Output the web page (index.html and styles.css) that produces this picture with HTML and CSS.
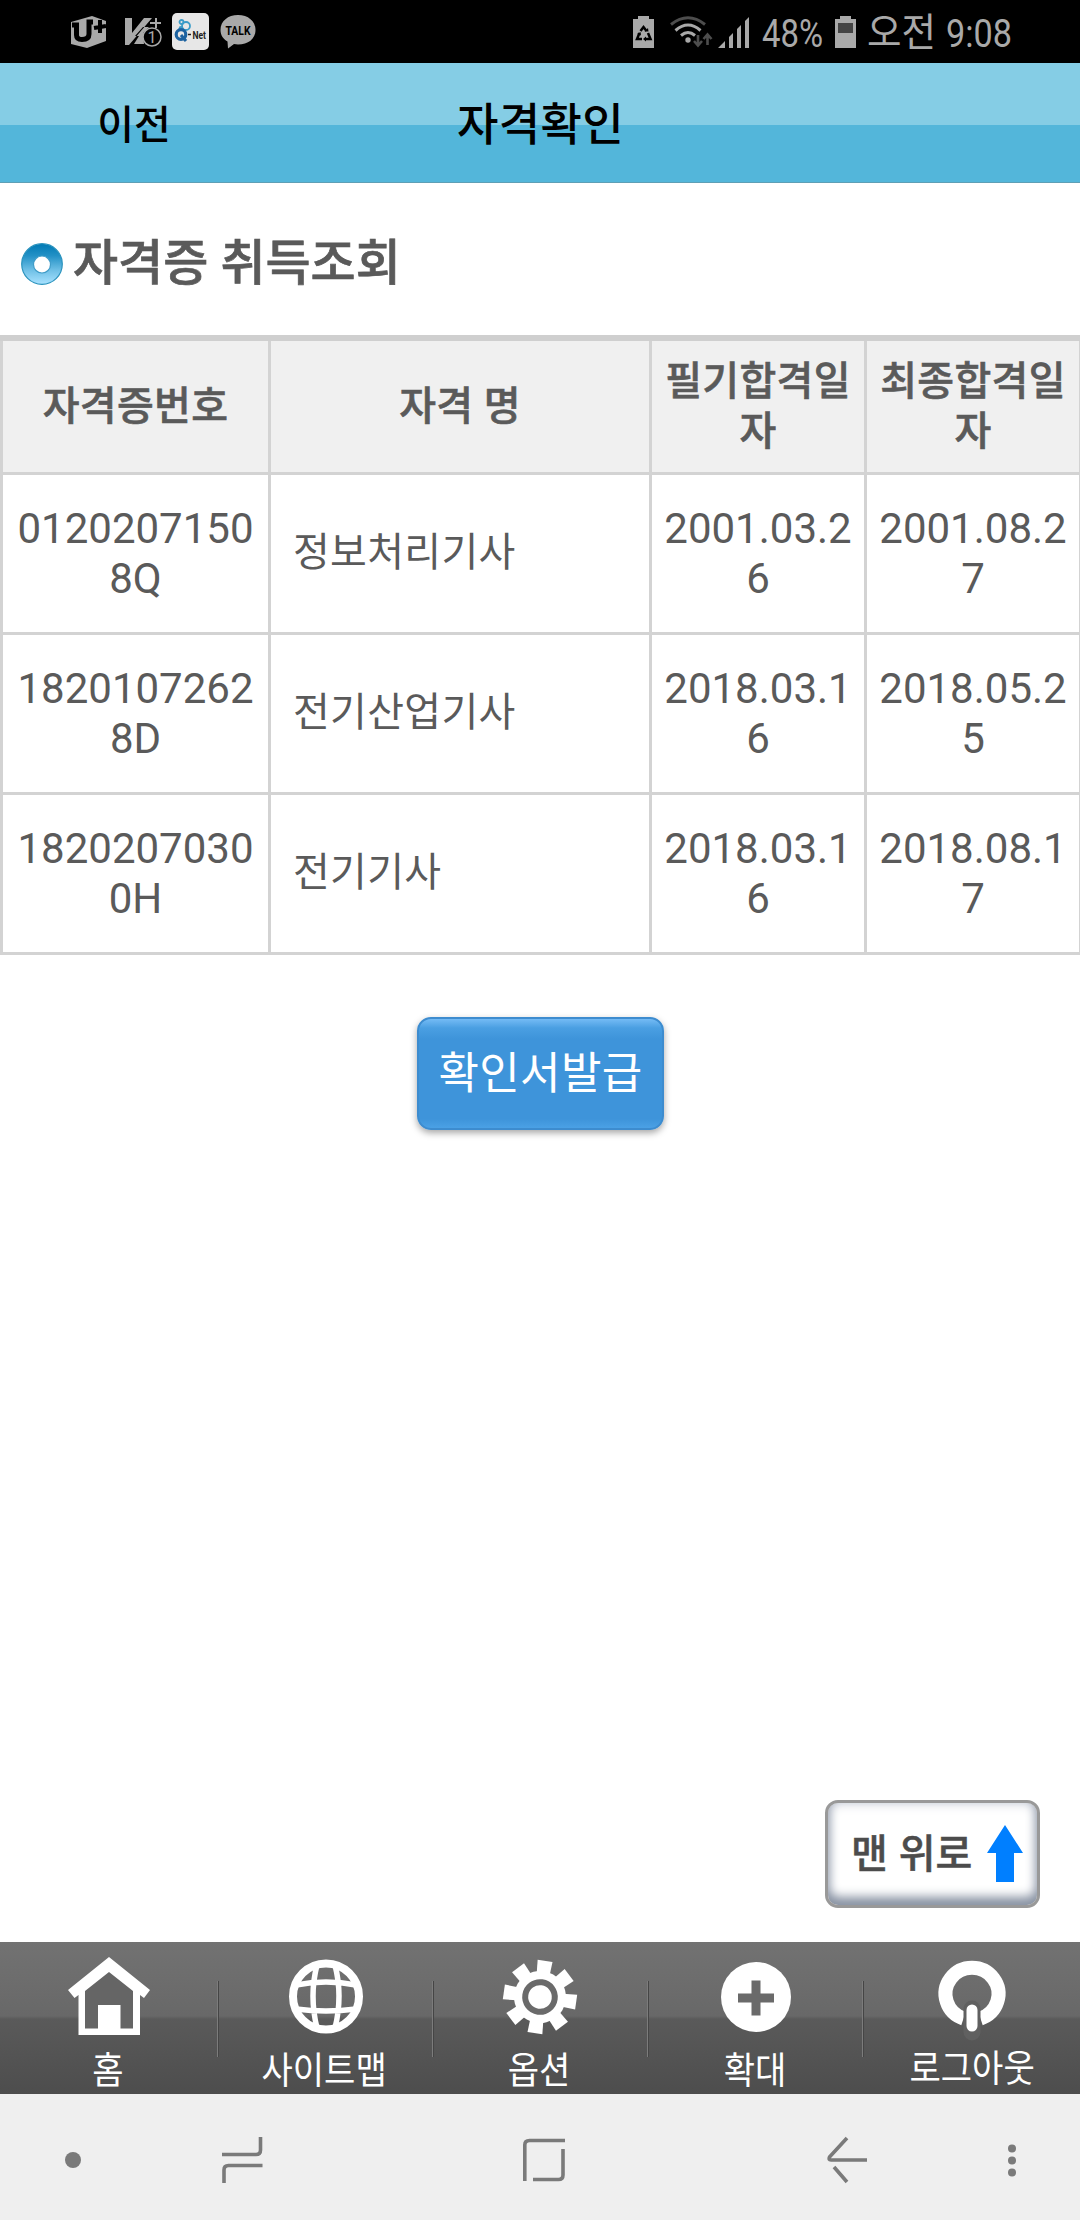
FILE: index.html
```html
<!DOCTYPE html>
<html lang="ko">
<head>
    <meta charset="UTF-8">
    <meta name="viewport" content="width=device-width, initial-scale=1.0">
    <title>자격확인</title>
    <link rel="stylesheet" href="styles.css">
</head>
<body>
    <div class="status-bar">
        <div class="status-left">
            <svg width="37" height="32" viewBox="0 0 37 32">
                <path fill="#a9a9a9" d="M1 6 L22 0 L36 5 V25 L17 32 L1 28 Z"/>
                <path fill="none" stroke="#000" stroke-width="5" d="M2 9 H6.500 V19 Q6.500 23.500 12 23.500 Q19 23.500 19 18 V6 H23"/>
                <path fill="none" stroke="#000" stroke-width="4" d="M24 12 L36 10 M30 4 V17"/>
            </svg>
            <svg width="37" height="32" viewBox="0 0 37 32">
                <path fill="#a9a9a9" d="M0 2 H7 V17 L19 2 H27 L4 29 H0 Z M18 17 L24 11 H18 L10 20 H14 L9 28 H19 Z"/>
                <path fill="none" stroke="#a9a9a9" stroke-width="2" d="M25 7 H36 M31 2 V12"/>
                <circle cx="27" cy="21" r="9" fill="#000" stroke="#a9a9a9" stroke-width="1.500"/>
                <text x="27" y="27" text-anchor="middle" class="badge-text">1</text>
            </svg>
            <svg width="37" height="37" viewBox="0 0 37 37">
                <rect width="37" height="37" rx="5" fill="#e7e7e7"/>
                <g fill="none" stroke="#3a9cc8" stroke-width="1.800">
                    <circle cx="9.500" cy="9" r="2"/>
                    <circle cx="14" cy="13" r="4"/>
                    <circle cx="9" cy="15.500" r="1.500"/>
                </g>
                <circle cx="9" cy="21.500" r="4.800" fill="none" stroke="#1c62a0" stroke-width="3.200"/>
                <path stroke="#1c62a0" stroke-width="3" d="M9 22 L14 28"/>
                <path stroke="#222" stroke-width="1.500" d="M16 21.500 H19"/>
                <text x="20.500" y="25.500" class="qnet-text" textLength="13.500" lengthAdjust="spacingAndGlyphs">Net</text>
            </svg>
            <svg width="36" height="34" viewBox="0 0 36 34">
                <path fill="#a9a9a9" d="M18 0 C28 0 35.500 6 35.500 15 C35.500 24 28 29.500 18 29.500 L14 29 L8 33.500 L7.500 26.500 C3 24 .5 20 .5 15 C.5 6 8 0 18 0 Z"/>
                <text x="5.500" y="19.500" class="talk-text" textLength="25" lengthAdjust="spacingAndGlyphs">TALK</text>
            </svg>
        </div>
        <div class="status-right">
            <svg width="21" height="32" viewBox="0 0 21 32">
                <path fill="#a9a9a9" d="M5 0 H16 V3 H21 V32 H0 V3 H5 Z"/>
                <path fill="none" stroke="#000" stroke-width="2.500" d="M7.500 15 L10.500 11 L13.500 15 M15 17 L17.500 23 H12 M9 23 H4 L6.500 17"/>
                <path d="M11.500 15.500 H15.500 L15 12 Z M13 20.500 V25.500 L10 23 Z M4 18 L7.500 16 L8 19.500 Z"/>
            </svg>
            <svg class="wifi" width="42" height="32" viewBox="0 0 42 32">
                <g fill="none" stroke="#a9a9a9" stroke-width="3">
                    <path stroke="#4d4d4d" d="M1 8.500 Q18 -5 35 8.500"/>
                    <path d="M5.500 14.500 Q18 3.500 30.500 14.500"/>
                    <path d="M11 19.500 Q18 13.500 25 19.500"/>
                </g>
                <circle cx="18" cy="24" r="2.700" fill="#a9a9a9"/>
                <path fill="none" stroke="#4d4d4d" stroke-width="2.600" d="M28 19 V29 M24 25 L28 29.500 L32 25 M37.500 29 V19 M33.500 23 L37.500 18.500 L41.500 23"/>
            </svg>
            <svg class="signal" width="32" height="32" viewBox="0 0 32 32">
                <path fill="#a9a9a9" d="M0 32 L7 25 V32 Z M11 21 L15 17 V32 H11 Z M19 13 L23 9 V32 H19 Z M27 5 L31 1 V32 H27 Z"/>
            </svg>
            <svg class="percent" width="65" height="56" viewBox="0 0 65 56">
                <text x="2" y="43" class="status-text" textLength="61" lengthAdjust="spacingAndGlyphs">48%</text>
            </svg>
            <svg class="battery" width="21" height="32" viewBox="0 0 21 32">
                <path fill="#a9a9a9" d="M5 0 H16 V3 H21 V32 H0 V3 H5 Z"/>
                <rect x="3" y="7" width="15" height="10" fill="#444"/>
            </svg>
            <svg class="clock" width="150" height="62" viewBox="0 0 150 62">
                <text x="2" y="45" class="status-text" textLength="69" lengthAdjust="spacingAndGlyphs">오전</text>
                <text x="81" y="46" class="status-text" textLength="66" lengthAdjust="spacingAndGlyphs">9:08</text>
            </svg>
        </div>
    </div>

    <header class="header">
        <a class="back">이전</a>
        <h1>자격확인</h1>
    </header>

    <main class="content">
        <div class="title">
            <svg width="42" height="42" viewBox="0 0 42 42">
                <defs>
                    <linearGradient id="ring" x1="0" y1="0" x2="0" y2="1">
                        <stop offset="0" stop-color="#0079b4"/>
                        <stop offset=".3" stop-color="#2391c6"/>
                        <stop offset=".65" stop-color="#6fc0e6"/>
                        <stop offset="1" stop-color="#a9e2ff"/>
                    </linearGradient>
                </defs>
                <circle cx="21" cy="21" r="20.300" fill="url(#ring)" stroke="#2b93bd" stroke-width="1.200"/>
                <circle cx="21" cy="21.500" r="8.500" fill="#fff" stroke="#3f9cc8" stroke-width="1.200"/>
            </svg>
            <h2>자격증 취득조회</h2>
        </div>

        <table class="list">
            <colgroup>
                <col class="col-no">
                <col class="col-name">
                <col class="col-date">
                <col class="col-date">
            </colgroup>
            <thead>
                <tr>
                    <th>자격증번호</th>
                    <th>자격 명</th>
                    <th>필기합격일자</th>
                    <th>최종합격일자</th>
                </tr>
            </thead>
            <tbody>
                <tr>
                    <td>01202071508Q</td>
                    <td class="name">정보처리기사</td>
                    <td>2001.03.26</td>
                    <td>2001.08.27</td>
                </tr>
                <tr>
                    <td>18201072628D</td>
                    <td class="name">전기산업기사</td>
                    <td>2018.03.16</td>
                    <td>2018.05.25</td>
                </tr>
                <tr>
                    <td>18202070300H</td>
                    <td class="name">전기기사</td>
                    <td>2018.03.16</td>
                    <td>2018.08.17</td>
                </tr>
            </tbody>
        </table>

        <button class="issue">확인서발급</button>

        <a class="go-top">
            <span>맨 위로</span>
            <svg width="36" height="58" viewBox="0 0 36 58">
                <path fill="#007fff" d="M18 0 L36 28 H27 V57 H9 V28 H0 Z"/>
            </svg>
        </a>
    </main>

    <footer class="tabs">
        <a class="tab">
            <svg width="84" height="80" viewBox="0 0 84 80">
                <path fill="#fff" d="M42 1 L83 34 L77 42 L73 39 V79 H11.500 V39 L7.500 42 L1 34 Z"/>
                <path fill="#656565" d="M42 16 L66 35 V72.500 H53.500 V49 H31 V72.500 H18 V35 Z"/>
            </svg>
            <span>홈</span>
        </a>
        <a class="tab sitemap">
            <svg width="84" height="80" viewBox="0 0 84 80">
                <g fill="none" stroke="#fff">
                    <circle cx="42" cy="40.500" r="33" stroke-width="8"/>
                    <path stroke-width="5.500" d="M33 9 Q25 40 33 72 M51 9 Q59 40 51 72 M12 29 Q42 23 72 29 M12 53 Q42 57 72 53"/>
                </g>
            </svg>
            <span>사이트맵</span>
        </a>
        <a class="tab">
            <svg width="84" height="80" viewBox="0 0 84 80">
                <g fill="#fff" transform="translate(42 41) rotate(8)">
                    <circle r="26"/>
                    <path id="tooth" d="M-6.500 -22 L-7.500 -36.500 H7.500 L6.500 -22 Z"/>
                    <use href="#tooth" transform="rotate(45)"/>
                    <use href="#tooth" transform="rotate(90)"/>
                    <use href="#tooth" transform="rotate(135)"/>
                    <use href="#tooth" transform="rotate(180)"/>
                    <use href="#tooth" transform="rotate(225)"/>
                    <use href="#tooth" transform="rotate(270)"/>
                    <use href="#tooth" transform="rotate(315)"/>
                    <circle r="14.800" fill="none" stroke="#6a6a6a" stroke-width="6"/>
                </g>
            </svg>
            <span>옵션</span>
        </a>
        <a class="tab zoom">
            <svg width="84" height="80" viewBox="0 0 84 80">
                <circle cx="42" cy="41" r="35" fill="#fff"/>
                <path stroke="#6a6a6a" stroke-width="9" d="M24 42 H60 M42 24.500 V59.500"/>
            </svg>
            <span>확대</span>
        </a>
        <a class="tab logout">
            <svg width="84" height="80" viewBox="0 0 84 80">
                <path fill="none" stroke="#fff" stroke-width="14" d="M33.500 62.500 A26.500 26 0 1 1 50.500 62.500"/>
                <path stroke="#606060" stroke-width="17" stroke-linecap="round" d="M42 53 V76"/>
                <path stroke="#fff" stroke-width="11" stroke-linecap="round" d="M42 54 V70"/>
            </svg>
            <span>로그아웃</span>
        </a>
    </footer>

    <nav class="nav-bar">
        <svg width="1080" height="126" viewBox="0 0 1080 126">
            <g fill="#7a7a7a">
                <circle cx="73" cy="66" r="8"/>
                <circle cx="1012" cy="54.500" r="4"/>
                <circle cx="1012" cy="66.500" r="4"/>
                <circle cx="1012" cy="78.500" r="4"/>
            </g>
            <g fill="none" stroke="#7a7a7a" stroke-width="3.600">
                <path d="M260.500 43 V56 Q260.500 60.500 256 60.500 H222 M224 89 V76 Q224 71.500 228.500 71.500 H262.500"/>
                <path d="M524.800 87 V51 Q524.800 46.500 529.500 46.500 H565 M563 55 V81 Q563 85.500 558.500 85.500 H533"/>
                <path d="M847 44 L829.500 63 Q828 66 831 66 H867 M834 73 L847 88"/>
            </g>
        </svg>
    </nav>
</body>
</html>
```
FILE: styles.css
```css
* {
    box-sizing: border-box;
    margin: 0;
    padding: 0;
}
body {
    width: 1080px;
    height: 2220px;
    display: flex;
    flex-direction: column;
    font-family: Roboto, "Noto Sans CJK KR", sans-serif;
    color: #5a5a5a;
    background-color: #fff;
    overflow: hidden;
}
svg {
    display: block;
    flex: none;
    overflow: visible;
}

/* status bar */
.status-bar {
    height: 63px;
    display: flex;
    justify-content: space-between;
    align-items: center;
    padding: 0 65px 0 70px;
    background-color: #000;
}
.status-left {
    display: flex;
    align-items: center;
    gap: 14px;
}
.status-left svg:nth-child(2) {
    margin-left: 4px;
}
.status-left svg:nth-child(3) {
    margin-left: -4px;
}
.status-left svg:nth-child(4) {
    margin-left: -3px;
}
.status-right {
    display: flex;
    align-items: center;
}
.wifi {
    margin-left: 16px;
}
.signal {
    margin-left: 6px;
}
.percent {
    margin-left: 10px;
}
.battery {
    margin-left: 10px;
}
.clock {
    margin-left: 9px;
}
.status-text {
    font-size: 39px;
    fill: #a9a9a9;
}
.badge-text {
    font-size: 16px;
    fill: #a9a9a9;
}
.qnet-text {
    font-size: 10px;
    font-weight: bold;
    fill: #222;
}
.talk-text {
    font-size: 12.5px;
    font-weight: bold;
}

/* header */
.header {
    height: 120px;
    display: grid;
    grid-template-columns: 268px 1fr 268px;
    align-items: center;
    text-align: center;
    color: #000;
    background: linear-gradient(#85cde5 62px, #53b6da 62px);
    border-bottom: 1px solid #5f9fb5;
    padding-bottom: 2px;
}
.back {
    font-size: 40px;
    font-weight: 500;
}
.header h1 {
    font-size: 45px;
    font-weight: 500;
    letter-spacing: 0.4px;
    padding-left: 1px;
}

/* content */
.content {
    flex: 1;
    display: flex;
    flex-direction: column;
}
.title {
    height: 152px;
    display: flex;
    align-items: center;
    gap: 10px;
    padding: 10px 0 0 21px;
}
.title h2 {
    font-size: 49px;
    line-height: 60px;
    font-weight: 500;
    -webkit-text-stroke: 0.7px #5a5a5a;
}
.list {
    width: 1082px;
    table-layout: fixed;
    border-collapse: collapse;
    border-top: 6px solid #cfcfcf;
}
.col-no {
    width: 268px;
}
.col-name {
    width: 381px;
}
.col-date {
    width: 215px;
}
.list th,
.list td {
    border: 3px solid #d3d3d3;
    text-align: center;
    line-height: 50px;
    word-break: break-all;
}
.list th {
    height: 135px;
    padding: 2px 9px 0;
    font-size: 40px;
    font-weight: 500;
    letter-spacing: 0.3px;
    border-top: 6px solid #cfcfcf;
    background-color: #f0f0f0;
    -webkit-text-stroke: 0.6px #5a5a5a;
}
.list td {
    height: 160px;
    padding: 2px 11px 0;
    font-size: 42px;
}
.list td.name {
    padding: 0 11px 0 22px;
    font-size: 40px;
    letter-spacing: 0.3px;
    text-align: left;
}
.issue {
    align-self: center;
    width: 247px;
    height: 113px;
    margin: 62px 0 0 1px;
    padding-bottom: 7px;
    border: 2px solid #3d8ccf;
    border-radius: 14px;
    font-family: inherit;
    font-size: 44px;
    letter-spacing: 0.3px;
    color: #fff;
    background: linear-gradient(#74bbf5, #4a9fe2 9px, #3e94da 20px, #3e94da 100px, #4ba1e5);
    box-shadow: 0 3px 7px rgba(0, 0, 0, 0.35);
}
.go-top {
    align-self: flex-end;
    width: 215px;
    height: 108px;
    margin: auto 40px 34px 0;
    display: flex;
    align-items: center;
    justify-content: space-between;
    padding: 0 14px 0 23px;
    border: 3px solid #999;
    border-radius: 13px;
    font-size: 40px;
    font-weight: 500;
    color: #4c4c4c;
    box-shadow: inset 0 -8px 11px #8993a3, inset 0 0 12px #c5cad6;
}
.go-top span {
    padding-bottom: 6px;
    word-spacing: 1px;
    -webkit-text-stroke: 0.5px #4c4c4c;
}

/* bottom tabs */
.tabs {
    height: 152px;
    display: flex;
    background: linear-gradient(#727272, #686868 74px, #5a5a5a 77px, #4d4d4d);
}
.tab {
    width: 215px;
    display: flex;
    flex-direction: column;
    align-items: center;
    padding-top: 14px;
    color: #fff;
    background: linear-gradient(90deg, #7c7c7c 1px, #454545 1px) no-repeat 0 39px / 2px 76px;
}
.tab:first-child {
    width: 217px;
    background: none;
}
.tab span {
    font-size: 37px;
    line-height: 44px;
    white-space: nowrap;
    margin-top: 14px;
    transform: scaleX(0.92);
}
.sitemap svg {
    margin-left: 3px;
}
.zoom {
    padding-left: 2px;
}
.logout {
    padding-left: 5px;
}
.logout span {
    margin-top: 12px;
}

/* android navigation */
.nav-bar {
    height: 126px;
    background-color: #efefef;
}
```
